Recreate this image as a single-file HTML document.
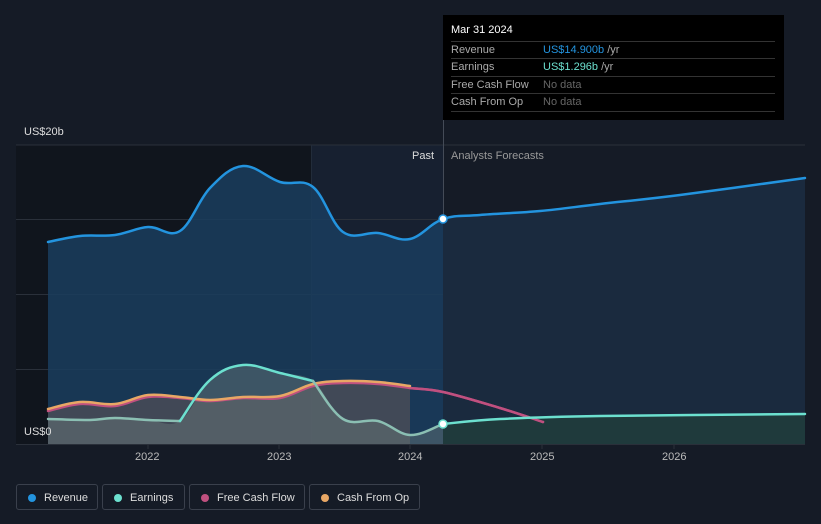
<!DOCTYPE html>
<html><head><meta charset="utf-8"><style>
body{margin:0;width:821px;height:524px;background:#151b26;font-family:"Liberation Sans",sans-serif;overflow:hidden;position:relative}
.t{position:absolute;font-size:11px;color:#fff}
.tip{position:absolute;left:443px;top:15px;width:341px;height:105px;background:#000;font-size:11px}
.row{position:absolute;left:8px;width:324px;border-top:1px solid #333;height:17px;line-height:17px;color:#aaa}
.row span{position:absolute;left:92px}
.leg{position:absolute;top:484px;height:26px;border:1px solid #3a404c;border-radius:3px;color:#ddd;font-size:11px;line-height:26px;box-sizing:border-box}
.leg i{position:absolute;left:11px;top:9px;width:8px;height:8px;border-radius:50%}
.leg b{font-weight:normal;position:absolute;left:27px}
</style></head><body>
<svg id="s" width="821" height="524" style="position:absolute;left:0;top:0">
<rect x="16" y="145" width="295" height="299" fill="#10151d"/>
<rect x="311" y="145" width="132" height="299" fill="#172030"/>
<g stroke="#2a303a" stroke-width="1">
<line x1="16" y1="145" x2="805" y2="145"/><line x1="16" y1="219.5" x2="805" y2="219.5"/><line x1="16" y1="294.5" x2="805" y2="294.5"/><line x1="16" y1="369.5" x2="805" y2="369.5"/><line x1="16" y1="444.5" x2="805" y2="444.5"/>
<line x1="148" y1="444" x2="148" y2="449"/><line x1="279" y1="444" x2="279" y2="449"/><line x1="410" y1="444" x2="410" y2="449"/><line x1="542" y1="444" x2="542" y2="449"/><line x1="674" y1="444" x2="674" y2="449"/>
</g>
<line x1="311.5" y1="145" x2="311.5" y2="444" stroke="#222c3a"/>
<line x1="443.5" y1="15" x2="443.5" y2="444" stroke="#444b57"/>
<g id="g"></g>
</svg>
<script>
var R=[[48,242],[80,236],[115,235],[148,227],[180,231],[210,188],[243,166],[280,182],[313,187],[343,232],[378,233],[410,239],[443,219],[480,215],[540,211],[600,204],[680,195],[805,178]];
var E=[[48,419],[90,420],[115,418],[148,420],[180,421],[210,380],[243,365],[280,373],[313,381],[343,419],[378,421],[410,435],[443,424],[500,419],[600,416],[805,414]];
var C=[[48,409],[80,402],[115,404],[148,395],[180,397],[210,400],[243,397],[280,396],[313,384],[343,381],[378,382],[410,386]];
var F=[[48,411],[80,404],[115,406],[148,397],[180,398],[210,401],[243,398],[280,398],[313,386],[343,383],[378,384],[410,388],[443,392],[500,408],[543,422]];
function sm(p){var d="M"+p[0][0]+","+p[0][1];for(var i=0;i<p.length-1;i++){var a=p[i-1]||p[i],b=p[i],c=p[i+1],e=p[i+2]||c;var t=0.18;
d+=" C"+(b[0]+(c[0]-a[0])*t)+","+(b[1]+(c[1]-a[1])*t)+" "+(c[0]-(e[0]-b[0])*t)+","+(c[1]-(e[1]-b[1])*t)+" "+c[0]+","+c[1];}return d;}
function sl(p,a,b){return p.filter(function(q){return q[0]>=a&&q[0]<=b});}
var h="";
function area(p,f,o){var d=sm(p);h+='<path d="'+d+' L'+p[p.length-1][0]+',444 L'+p[0][0]+',444Z" fill="'+f+'" opacity="'+o+'"/>';}
function line(p,c){h+='<path d="'+sm(p)+'" fill="none" stroke="'+c+'" stroke-width="2.5" stroke-linecap="round"/>';}
area(sl(R,0,443),"#1a3d5e",0.85);area(sl(R,443,900),"#1a2a3e",1);
area(C,"#6a5a58",0.5);area(sl(E,0,443),"#6a7a7a",0.45);area(sl(E,443,900),"#1f3a3c",1);
line(R,"#2394df");line(sl(F,410,900),"#b8457f");line(F,"#c0507f");line(C,"#e8a765");
line(sl(E,0,180),"#8bbfb3");line(sl(E,180,313),"#6ce0cf");line(sl(E,313,443),"#8bbfb3");line(sl(E,443,900),"#6ce0cf");
h+='<circle cx="443" cy="219" r="4" fill="#fff" stroke="#2394df" stroke-width="1.5"/><circle cx="443" cy="424" r="4" fill="#fff" stroke="#6ce0cf" stroke-width="1.5"/>';
document.getElementById("g").innerHTML=h;
</script>
<div class="t" style="left:24px;top:126px;color:#ddd">US$20b</div>
<div class="t" style="left:24px;top:426px;color:#ddd">US$0</div>
<div class="t" style="left:412px;top:150px;color:#ddd">Past</div>
<div class="t" style="left:451px;top:150px;color:#999">Analysts Forecasts</div>
<div class="t" style="left:135px;top:451px;color:#bbb">2022</div>
<div class="t" style="left:267px;top:451px;color:#bbb">2023</div>
<div class="t" style="left:398px;top:451px;color:#bbb">2024</div>
<div class="t" style="left:530px;top:451px;color:#bbb">2025</div>
<div class="t" style="left:662px;top:451px;color:#bbb">2026</div>
<div class="tip">
<div style="position:absolute;left:8px;top:9px;color:#fff">Mar 31 2024</div>
<div class="row" style="top:26px">Revenue<span><em style="font-style:normal;color:#2394df">US$14.900b</em> /yr</span></div>
<div class="row" style="top:43px">Earnings<span><em style="font-style:normal;color:#6ce0cf">US$1.296b</em> /yr</span></div>
<div class="row" style="top:61px">Free Cash Flow<span style="color:#666">No data</span></div>
<div class="row" style="top:78px;border-bottom:1px solid #333">Cash From Op<span style="color:#666">No data</span></div>
</div>
<div class="leg" style="left:16px;width:82px"><i style="background:#2394df"></i><b>Revenue</b></div>
<div class="leg" style="left:102px;width:83px"><i style="background:#6ce0cf"></i><b>Earnings</b></div>
<div class="leg" style="left:189px;width:116px"><i style="background:#c0507f"></i><b>Free Cash Flow</b></div>
<div class="leg" style="left:309px;width:111px"><i style="background:#e8a765"></i><b>Cash From Op</b></div>
</body></html>
